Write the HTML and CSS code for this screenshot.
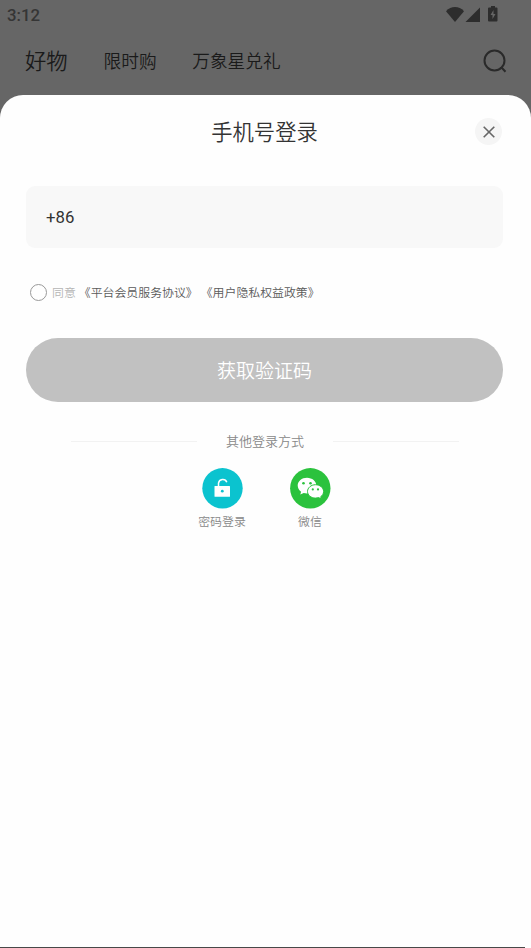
FILE: index.html
```html
<!DOCTYPE html>
<html lang="zh-CN">
<head>
<meta charset="utf-8">
<title>手机号登录</title>
<link rel="stylesheet" href="styles.css">
</head>
<body>
<header class="status">
  <span class="time">3:12</span>
  <svg class="status-icons" width="54" height="18" viewBox="0 0 54 18">
    <path d="M0 5.200C5-.3 13-.3 18 5.200L9 16Z"/>
    <path d="M34 1.500V16H19.500Z"/>
    <path fill-rule="evenodd" d="M45 0h4v1.500h1.500q1 0 1 1V14.500q0 1-1 1h-7.500q-1 0-1-1V2.500q0-1 1-1h2ZM47.500 4l-3 5h2V13l3-5h-2Z"/>
  </svg>
</header>
<nav class="tabs">
  <span class="tab tab-active">好物</span>
  <span class="tab tab-flash">限时购</span>
  <span class="tab tab-gift">万象星兑礼</span>
  <svg class="search" width="26" height="26" viewBox="0 0 26 26"><circle cx="12.500" cy="12.500" r="10"/><path d="M18 20h2l3.500 3.800"/></svg>
</nav>
<main class="sheet">
  <div class="title-row">
    <h1>手机号登录</h1>
    <button class="close" aria-label="关闭"><svg width="12" height="12" viewBox="0 0 12 12"><path d="M.7.700l10.600 10.600M11.300.700L.7 11.300"/></svg></button>
  </div>
  <div class="phone">+86</div>
  <div class="agreement">
    <span class="radio"></span>
    <span class="agree">同意</span>
    <span class="policy">《平台会员服务协议》</span>
    <span class="policy">《用户隐私权益政策》</span>
  </div>
  <button class="submit">获取验证码</button>
  <div class="divider"><i></i><span>其他登录方式</span><i></i></div>
  <div class="methods">
    <div class="method">
      <svg width="41" height="41" viewBox="0 0 41 41">
        <circle cx="20.500" cy="20.300" r="20.200" fill="#0bc3cf"/>
        <path d="M16.500 19v-3.800a4.300 4.300 0 0 1 8.300-1" fill="none" stroke="#fff" stroke-width="1.500"/>
        <rect x="12.500" y="18" width="15.500" height="10.700" rx=".5" fill="#fff"/>
        <circle cx="20.300" cy="23.200" r="1.400" fill="#0bc3cf"/>
      </svg>
      <span>密码登录</span>
    </div>
    <div class="method">
      <svg width="41" height="41" viewBox="0 0 41 41">
        <circle cx="20.300" cy="20.300" r="20.200" fill="#2bc23d"/>
        <path d="M17 9.700c-5.200 0-9.300 3.500-9.300 7.900 0 2.500 1.300 4.700 3.400 6.100l-.8 2.900 3.400-1.700c1 .3 2.200.5 3.300.5 5.200 0 9.300-3.500 9.300-7.800s-4.100-7.900-9.300-7.900Z" fill="#fff"/>
        <path d="M25.500 16.700c4.500 0 8.100 3 8.100 6.800 0 2.100-1.100 4-2.900 5.200l.7 2.300-2.800-1.400c-1 .3-2 .5-3.100.5-4.500 0-8-3-8-6.600s3.500-6.800 8-6.800Z" fill="#fff" stroke="#2bc23d" stroke-width="1"/>
        <g fill="#2bc23d"><circle cx="13.500" cy="15.200" r="1.300"/><circle cx="20.500" cy="15.200" r="1.300"/><circle cx="22.800" cy="21.400" r="1.100"/><circle cx="28" cy="21.400" r="1.100"/></g>
      </svg>
      <span>微信</span>
    </div>
  </div>
  <div class="baseline"></div>
</main>
</body>
</html>
```
FILE: styles.css
```css
* { box-sizing: border-box; }
body {
  margin: 0;
  height: 948px;
  display: flex;
  flex-direction: column;
  overflow: hidden;
  background: #666;
  font-family: "Noto Sans CJK SC", sans-serif;
  font-weight: 350;
}
button { border: 0; padding: 0; font: inherit; }
svg { display: block; flex: none; }
.status {
  height: 30px;
  padding: 0 31px 0 7px;
  display: flex;
  justify-content: space-between;
  align-items: center;
}
.time { font: 500 16.800px/30px Roboto, sans-serif; color: #353535; }
.status-icons { fill: #2d2d2d; margin-top: -1px; }
.tabs {
  height: 65px;
  padding: 0 23px 4px 25px;
  display: flex;
  align-items: center;
  color: #1a1a1a;
  white-space: nowrap;
}
.tab { font-size: 17.700px; line-height: 30px; margin-top: -1px; }
.tab-active { font-size: 21.300px; }
.tab-flash { margin-left: 36px; }
.tab-gift { margin-left: 35.500px; }
.search { margin: 1px 0 0 auto; fill: none; stroke: #2a2a2a; stroke-width: 2; }
.sheet {
  flex: 1;
  display: flex;
  flex-direction: column;
  background: #fefefe;
  border-radius: 23px 23px 0 0;
  padding: 0 28px 0 26px;
}
.title-row {
  height: 73px;
  display: grid;
  grid-template-columns: 27px 1fr 27px;
  align-items: center;
}
h1 {
  grid-column: 2;
  margin: -2px 0 0;
  font-size: 21.300px;
  line-height: 32px;
  font-weight: 350;
  color: #333;
  text-align: center;
}
.close {
  width: 27px;
  height: 27px;
  margin-left: -1px;
  border-radius: 50%;
  background: #f5f5f5;
  display: grid;
  place-items: center;
}
.close svg { fill: none; stroke: #666; stroke-width: 1.600; }
.phone {
  margin-top: 18px;
  height: 62px;
  padding: 0 20px;
  border-radius: 9px;
  background: #f8f8f8;
  font: 400 16.800px/63px Roboto, sans-serif;
  color: #333;
}
.agreement {
  height: 24px;
  margin: 32px 0 0 4px;
  display: flex;
  align-items: center;
  font-size: 11.900px;
  line-height: 24px;
  white-space: nowrap;
}
.radio {
  width: 17px;
  height: 17px;
  border: 1px solid #999;
  border-radius: 50%;
}
.agree { margin-left: 5px; color: #b5b5b5; }
.policy { margin-left: 3px; color: #5a5a5a; }
.submit {
  margin-top: 34px;
  height: 64px;
  flex: none;
  border-radius: 32px;
  background: #c1c1c1;
  color: #fff;
  font-size: 19px;
  padding-bottom: 2px;
}
.divider {
  height: 24px;
  margin: 27px 44px 0 45px;
  display: flex;
  align-items: center;
  justify-content: space-between;
  font-size: 13px;
  line-height: 24px;
  color: #888;
}
.divider i { width: 126px; height: 1px; background: #f2f2f2; }
.methods {
  margin-top: 15px;
  display: flex;
  justify-content: center;
  gap: 28px;
  padding-left: 3px;
}
.method {
  width: 60px;
  display: flex;
  flex-direction: column;
  align-items: center;
  font-size: 11.900px;
  line-height: 24px;
  color: #888;
}
.baseline { margin: auto 0 0 -26px; width: 525px; height: 1px; background: #484848; }
```
